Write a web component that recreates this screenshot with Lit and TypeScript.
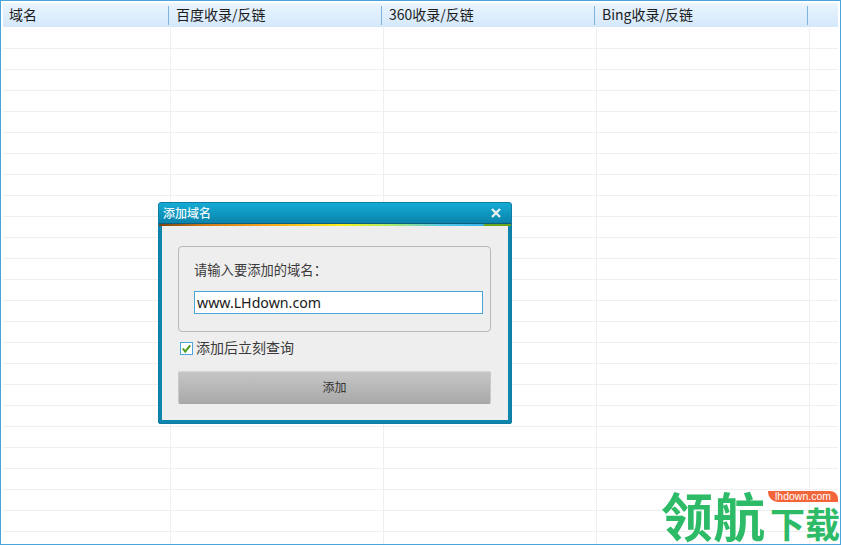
import { LitElement, html, css } from "lit";
import { customElement } from "lit/decorators.js";

@customElement("app-root")
export class AppRoot extends LitElement {
  static styles = css`
    :host {
      display: block;
      position: relative;
      width: 841px;
      height: 545px;
      overflow: hidden;
      box-sizing: border-box;
      border: 1px solid #4aa5dc;
      background: #fff;
      font-family: "Noto Sans CJK SC", "Noto Sans", sans-serif;
      color: #222;
    }
    .table { padding: 2px 2px 0 2px; }
    .head {
      display: grid;
      grid-template-columns: 166px 213px 213px 213px 1fr;
      height: 24px;
      margin-bottom: 1px;
      background: linear-gradient(#eaf5ff, #d4e8fb);
      font-size: 14px;
      line-height: 23px;
    }
    .hc {
      position: relative;
      padding-left: 6px;
      white-space: nowrap;
      color: #1c1c1c;
    }
    .hc.sep::after {
      content: "";
      position: absolute;
      right: 0;
      top: 3px;
      bottom: 2px;
      width: 1px;
      background: #7db3e0;
    }
    .hc + .hc { padding-left: 7px; }
    .row {
      display: grid;
      grid-template-columns: 168px 213px 213px 213px 1fr;
      height: 21px;
      box-sizing: border-box;
      border-bottom: 1px solid #efefef;
    }
    .cell { border-right: 1px solid #efefef; }
    .cell:last-child { border-right: 0; }

    .dialog {
      position: absolute;
      left: 157px;
      top: 201px;
      width: 354px;
      height: 222px;
      box-sizing: border-box;
      border: 1px solid #0f7ca6;
      border-radius: 3px 3px 2px 2px;
      background: #0d85ad;
      display: flex;
      flex-direction: column;
    }
    .title {
      flex: none;
      display: flex;
      align-items: center;
      justify-content: space-between;
      padding: 0 10px 1px 4px;
      background: linear-gradient(#14abd4, #0a83ab);
      color: #f2fafc;
      font-size: 12px;
      font-weight: 500;
      border-radius: 2px 2px 0 0;
      border-bottom: 1px solid #0c5f7c;
      box-sizing: content-box;
      height: 19px;
    }
    .rainbow {
      height: 2px;
      flex: none;
      background: linear-gradient(90deg, #7a4410 0, #c8761a 12%, #f6a21c 30%, #f9ee1a 52%, #a5e86a 66%, #55c8e8 80%, #37b6ee 92%, #6aa51e 92.5%, #6aa51e 100%);
    }
    .body {
      flex: 1;
      margin: 0 3px 3px 3px;
      background: #eeeeee;
      padding: 20px 17px 0 16px;
      display: flex;
      flex-direction: column;
    }
    .group {
      height: 86px;
      box-sizing: border-box;
      border: 1px solid #b8b8b8;
      border-radius: 4px;
      padding: 13px 7px 0 15px;
      font-size: 13.3px;
      color: #3a3a3a;
      line-height: 19px;
    }
    .input {
      margin-top: 12px;
      height: 23px;
      box-sizing: border-box;
      border: 1px solid #4aa5dc;
      background: #fff;
      padding-left: 2px;
      font-family: "Noto Sans", "Noto Sans CJK SC", sans-serif;
      font-size: 14.2px;
      line-height: 21px;
      color: #1a1a1a;
    }
    .check {
      display: flex;
      align-items: center;
      gap: 3px;
      margin: 9px 0 0 2px;
      height: 14px;
      font-size: 14px;
      color: #3a3a3a;
    }
    .check span { padding-bottom: 3px; line-height: 14px; }
    .btn {
      margin-top: 16px;
      height: 33px;
      box-sizing: border-box;
      border: 1px solid #c9c9c9;
      border-top-color: #d6d6d6;
      border-bottom-color: #a4a4a4;
      border-radius: 2px;
      background: linear-gradient(#c6c6c6, #a9a9a9);
      display: flex;
      align-items: center;
      justify-content: center;
      padding-bottom: 2px;
      font-size: 12px;
      color: #333;
    }
    .mark {
      position: absolute;
      right: 0;
      bottom: 4px;
      display: flex;
      align-items: flex-end;
      font-weight: 700;
      color: #2dbb67;
      white-space: nowrap;
    }
    .big { font-size: 52px; line-height: 51px; margin-right: 5px; }
    .small { font-size: 35px; line-height: 35px; }
    .tag {
      position: absolute;
      left: 767px;
      top: 490px;
      width: 70px;
      height: 11px;
      border-radius: 0 8px 0 10px;
      background: #f2653a;
      color: #fff;
      font-family: "Liberation Sans", sans-serif;
      font-size: 10.5px;
      line-height: 11px;
      text-align: center;
    }
  `;

  render() {
    const rows = Array.from({ length: 25 });
    return html`
      <div class="table">
        <div class="head">
          <div class="hc sep">域名</div>
          <div class="hc sep">百度收录/反链</div>
          <div class="hc sep">360收录/反链</div>
          <div class="hc sep">Bing收录/反链</div>
          <div class="hc"></div>
        </div>
        ${rows.map(
          () => html`<div class="row">
            <div class="cell"></div><div class="cell"></div><div class="cell"></div><div class="cell"></div><div class="cell"></div>
          </div>`
        )}
      </div>
      <div class="dialog">
        <div class="title">
          <span>添加域名</span>
          <svg width="10" height="10" viewBox="0 0 10 10">
            <path d="M1 1 L9 9 M9 1 L1 9" stroke="#e8f0f2" stroke-width="2.4" fill="none" />
          </svg>
        </div>
        <div class="rainbow"></div>
        <div class="body">
          <div class="group">
            <div>请输入要添加的域名：</div>
            <div class="input">www.LHdown.com</div>
          </div>
          <div class="check">
            <svg width="13" height="13" viewBox="0 0 13 13">
              <rect x="0.5" y="0.5" width="12" height="12" fill="#fff" stroke="#4aa5dc" />
              <path d="M2.8 6.5 L5.2 9.6 L10.2 3.4" stroke="#4a9e1e" stroke-width="2" fill="none" />
            </svg>
            <span>添加后立刻查询</span>
          </div>
          <div class="btn">添加</div>
        </div>
      </div>
      <div class="mark"><span class="big">领航</span><span class="small">下载</span></div>
      <div class="tag">lhdown.com</div>
    `;
  }
}
